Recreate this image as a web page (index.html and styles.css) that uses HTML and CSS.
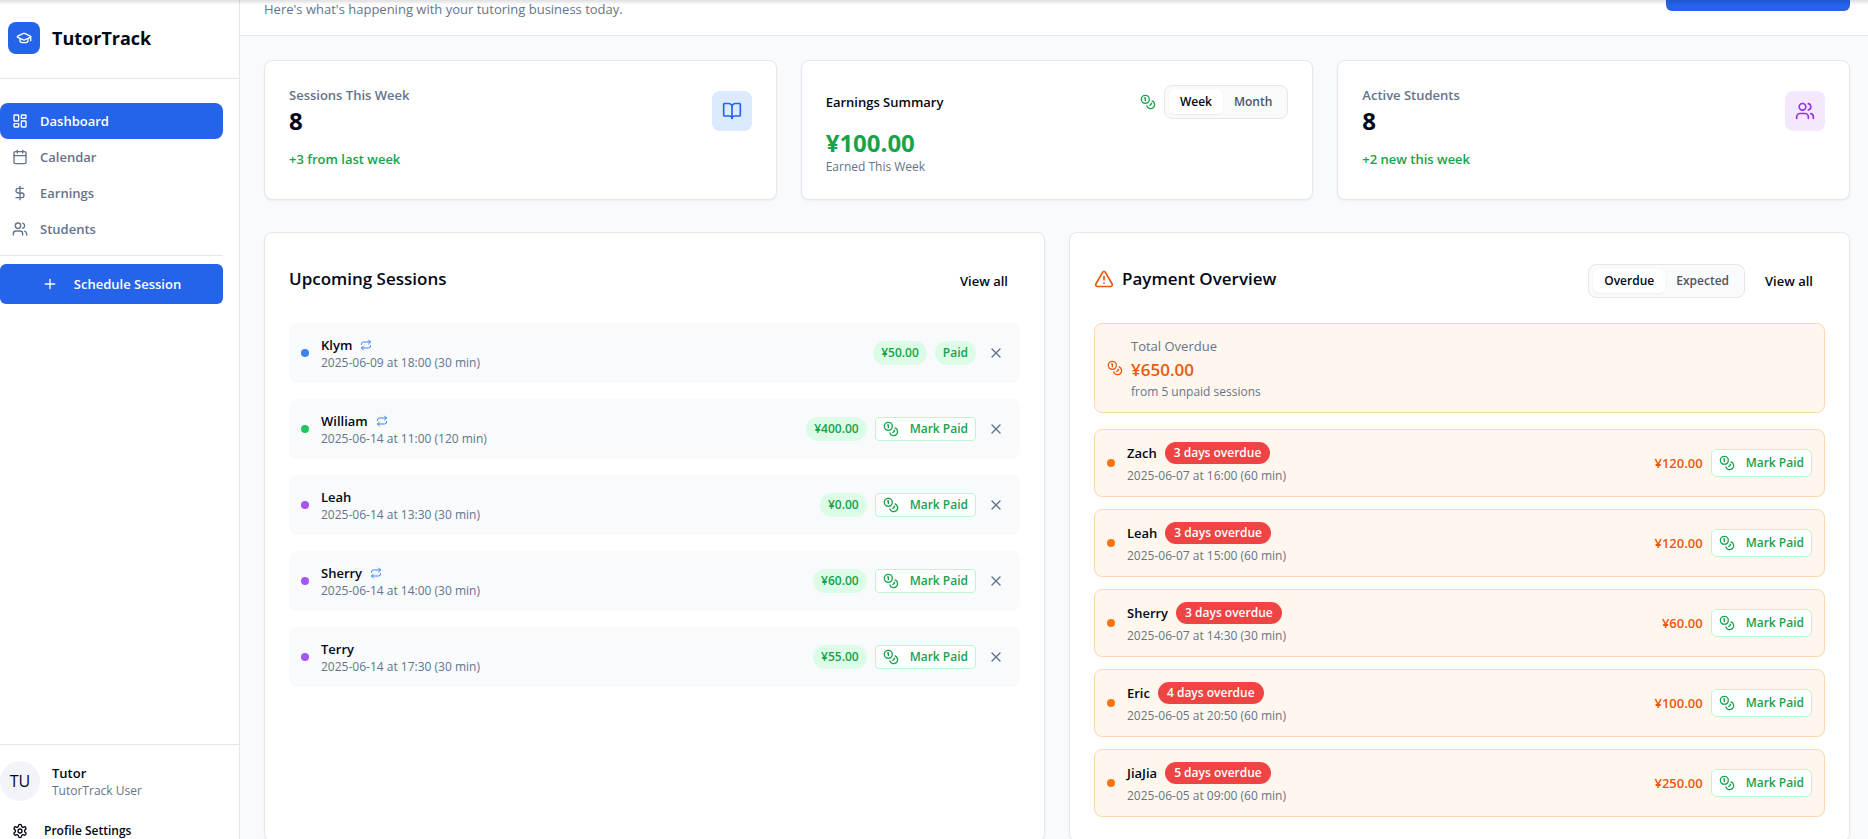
FILE: index.html
```html
<!DOCTYPE html>
<html lang="en">
<head>
<meta charset="utf-8">
<meta name="viewport" content="width=device-width, initial-scale=1">
<title>TutorTrack</title>
<link rel="stylesheet" href="styles.css">
</head>
<body>
<svg class="sprite" aria-hidden="true">
  <symbol id="cap" viewBox="0 0 24 24"><path d="M21.42 10.922a1 1 0 0 0-.019-1.838L12.83 5.18a2 2 0 0 0-1.66 0L2.6 9.08a1 1 0 0 0 0 1.832l8.57 3.908a2 2 0 0 0 1.66 0z"/><path d="M22 10v6"/><path d="M6 12.5V16a6 3 0 0 0 12 0v-3.5"/></symbol>
  <symbol id="dashboard" viewBox="0 0 24 24"><rect width="7" height="9" x="3" y="3" rx="1"/><rect width="7" height="5" x="14" y="3" rx="1"/><rect width="7" height="9" x="14" y="12" rx="1"/><rect width="7" height="5" x="3" y="16" rx="1"/></symbol>
  <symbol id="calendar" viewBox="0 0 24 24"><path d="M8 2v4"/><path d="M16 2v4"/><rect width="18" height="18" x="3" y="4" rx="2"/><path d="M3 10h18"/></symbol>
  <symbol id="dollar" viewBox="0 0 24 24"><path d="M12 2v20"/><path d="M17 5H9.5a3.5 3.5 0 0 0 0 7h5a3.5 3.5 0 0 1 0 7H6"/></symbol>
  <symbol id="users" viewBox="0 0 24 24"><path d="M16 21v-2a4 4 0 0 0-4-4H6a4 4 0 0 0-4 4v2"/><circle cx="9" cy="7" r="4"/><path d="M22 21v-2a4 4 0 0 0-3-3.87"/><path d="M16 3.13a4 4 0 0 1 0 7.75"/></symbol>
  <symbol id="plus" viewBox="0 0 24 24"><path d="M5 12h14"/><path d="M12 5v14"/></symbol>
  <symbol id="settings" viewBox="0 0 24 24"><path d="M12.22 2h-.44a2 2 0 0 0-2 2v.18a2 2 0 0 1-1 1.73l-.43.25a2 2 0 0 1-2 0l-.15-.08a2 2 0 0 0-2.73.73l-.22.38a2 2 0 0 0 .73 2.73l.15.1a2 2 0 0 1 1 1.72v.51a2 2 0 0 1-1 1.74l-.15.09a2 2 0 0 0-.73 2.73l.22.38a2 2 0 0 0 2.73.73l.15-.08a2 2 0 0 1 2 0l.43.25a2 2 0 0 1 1 1.73V20a2 2 0 0 0 2 2h.44a2 2 0 0 0 2-2v-.18a2 2 0 0 1 1-1.73l.43-.25a2 2 0 0 1 2 0l.15.08a2 2 0 0 0 2.73-.73l.22-.39a2 2 0 0 0-.73-2.73l-.15-.08a2 2 0 0 1-1-1.74v-.5a2 2 0 0 1 1-1.74l.15-.09a2 2 0 0 0 .73-2.73l-.22-.38a2 2 0 0 0-2.73-.73l-.15.08a2 2 0 0 1-2 0l-.43-.25a2 2 0 0 1-1-1.73V4a2 2 0 0 0-2-2z"/><circle cx="12" cy="12" r="3"/></symbol>
  <symbol id="book" viewBox="0 0 24 24"><path d="M12 7v14"/><path d="M3 18a1 1 0 0 1-1-1V4a1 1 0 0 1 1-1h5a4 4 0 0 1 4 4 4 4 0 0 1 4-4h5a1 1 0 0 1 1 1v13a1 1 0 0 1-1 1h-6a3 3 0 0 0-3 3 3 3 0 0 0-3-3z"/></symbol>
  <symbol id="coins" viewBox="0 0 24 24"><circle cx="8" cy="8" r="6"/><path d="M18.09 10.37A6 6 0 1 1 10.34 18"/><path d="M7 6h1v4"/><path d="m16.71 13.88.7.71-2.82 2.82"/></symbol>
  <symbol id="repeat" viewBox="0 0 24 24"><path d="m17 2 4 4-4 4"/><path d="M3 11v-1a4 4 0 0 1 4-4h14"/><path d="m7 22-4-4 4-4"/><path d="M21 13v1a4 4 0 0 1-4 4H3"/></symbol>
  <symbol id="close" viewBox="0 0 24 24"><path d="M18 6 6 18"/><path d="m6 6 12 12"/></symbol>
  <symbol id="alert" viewBox="0 0 24 24"><path d="m21.73 18-8-14a2 2 0 0 0-3.48 0l-8 14A2 2 0 0 0 4 21h16a2 2 0 0 0 1.73-3"/><path d="M12 9v4"/><path d="M12 17h.01"/></symbol>
</svg>

<div class="app">
  <aside class="sidebar">
    <div class="brand">
      <span class="brand-mark"><svg class="icon"><use href="#cap"/></svg></span>
      <span class="brand-name">TutorTrack</span>
    </div>
    <nav class="nav">
      <a class="nav-link active" href="#"><svg class="icon"><use href="#dashboard"/></svg>Dashboard</a>
      <a class="nav-link" href="#"><svg class="icon"><use href="#calendar"/></svg>Calendar</a>
      <a class="nav-link" href="#"><svg class="icon"><use href="#dollar"/></svg>Earnings</a>
      <a class="nav-link" href="#"><svg class="icon"><use href="#users"/></svg>Students</a>
      <div class="nav-action">
        <button class="schedule" type="button"><svg class="icon"><use href="#plus"/></svg>Schedule Session</button>
      </div>
    </nav>
    <div class="account">
      <div class="profile">
        <span class="avatar">TU</span>
        <div>
          <div class="name">Tutor</div>
          <div class="meta">TutorTrack User</div>
        </div>
      </div>
      <a class="settings" href="#"><svg class="icon"><use href="#settings"/></svg>Profile Settings</a>
    </div>
  </aside>

  <main class="main">
    <header class="topbar">
      <p class="subtitle">Here's what's happening with your tutoring business today.</p>
      <button class="topbar-action" type="button" aria-label="Schedule Session"></button>
    </header>

    <div class="content">
      <section class="stats">
        <article class="card stat">
          <div class="stat-top">
            <div>
              <div class="stat-label">Sessions This Week</div>
              <div class="stat-value">8</div>
            </div>
            <span class="stat-icon blue"><svg class="icon large"><use href="#book"/></svg></span>
          </div>
          <div class="trend">+3 from last week</div>
        </article>

        <article class="card stat">
          <div class="earn-head">
            <h2 class="earn-title">Earnings Summary</h2>
            <svg class="icon green"><use href="#coins"/></svg>
            <div class="toggle" role="group" aria-label="Earnings period">
              <button class="on" type="button" aria-pressed="true">Week</button>
              <button type="button" aria-pressed="false">Month</button>
            </div>
          </div>
          <div class="stat-value green">¥100.00</div>
          <div class="meta">Earned This Week</div>
        </article>

        <article class="card stat">
          <div class="stat-top">
            <div>
              <div class="stat-label">Active Students</div>
              <div class="stat-value">8</div>
            </div>
            <span class="stat-icon purple"><svg class="icon large"><use href="#users"/></svg></span>
          </div>
          <div class="trend">+2 new this week</div>
        </article>
      </section>

      <section class="panels">
        <article class="card panel">
          <div class="panel-head">
            <h2 class="panel-title">Upcoming Sessions</h2>
            <button class="view-all" type="button">View all</button>
          </div>
          <ul class="sessions">
            <li class="session">
              <span class="dot blue"></span>
              <div class="who"><div class="name">Klym<svg class="icon small"><use href="#repeat"/></svg></div><div class="meta">2025-06-09 at 18:00 (30 min)</div></div>
              <span class="pill">¥50.00</span><span class="pill">Paid</span>
              <button class="dismiss" type="button" aria-label="Cancel session"><svg class="icon"><use href="#close"/></svg></button>
            </li>
            <li class="session">
              <span class="dot green"></span>
              <div class="who"><div class="name">William<svg class="icon small"><use href="#repeat"/></svg></div><div class="meta">2025-06-14 at 11:00 (120 min)</div></div>
              <span class="pill">¥400.00</span>
              <button class="mark" type="button"><svg class="icon"><use href="#coins"/></svg>Mark Paid</button>
              <button class="dismiss" type="button" aria-label="Cancel session"><svg class="icon"><use href="#close"/></svg></button>
            </li>
            <li class="session">
              <span class="dot purple"></span>
              <div class="who"><div class="name">Leah</div><div class="meta">2025-06-14 at 13:30 (30 min)</div></div>
              <span class="pill">¥0.00</span>
              <button class="mark" type="button"><svg class="icon"><use href="#coins"/></svg>Mark Paid</button>
              <button class="dismiss" type="button" aria-label="Cancel session"><svg class="icon"><use href="#close"/></svg></button>
            </li>
            <li class="session">
              <span class="dot purple"></span>
              <div class="who"><div class="name">Sherry<svg class="icon small"><use href="#repeat"/></svg></div><div class="meta">2025-06-14 at 14:00 (30 min)</div></div>
              <span class="pill">¥60.00</span>
              <button class="mark" type="button"><svg class="icon"><use href="#coins"/></svg>Mark Paid</button>
              <button class="dismiss" type="button" aria-label="Cancel session"><svg class="icon"><use href="#close"/></svg></button>
            </li>
            <li class="session">
              <span class="dot purple"></span>
              <div class="who"><div class="name">Terry</div><div class="meta">2025-06-14 at 17:30 (30 min)</div></div>
              <span class="pill">¥55.00</span>
              <button class="mark" type="button"><svg class="icon"><use href="#coins"/></svg>Mark Paid</button>
              <button class="dismiss" type="button" aria-label="Cancel session"><svg class="icon"><use href="#close"/></svg></button>
            </li>
          </ul>
        </article>

        <article class="card panel">
          <div class="panel-head">
            <h2 class="panel-title"><svg class="icon large orange"><use href="#alert"/></svg>Payment Overview</h2>
            <div class="toggle" role="group" aria-label="Payment status">
              <button class="on" type="button" aria-pressed="true">Overdue</button>
              <button type="button" aria-pressed="false">Expected</button>
            </div>
            <button class="view-all" type="button">View all</button>
          </div>
          <div class="total">
            <svg class="icon orange"><use href="#coins"/></svg>
            <div>
              <div class="total-label">Total Overdue</div>
              <div class="total-value">¥650.00</div>
              <div class="meta">from 5 unpaid sessions</div>
            </div>
          </div>
          <ul class="payments">
            <li class="payment">
              <span class="dot orange"></span>
              <div class="who"><div class="name">Zach<span class="badge">3 days overdue</span></div><div class="meta">2025-06-07 at 16:00 (60 min)</div></div>
              <span class="amount">¥120.00</span>
              <button class="mark tall" type="button"><svg class="icon"><use href="#coins"/></svg>Mark Paid</button>
            </li>
            <li class="payment">
              <span class="dot orange"></span>
              <div class="who"><div class="name">Leah<span class="badge">3 days overdue</span></div><div class="meta">2025-06-07 at 15:00 (60 min)</div></div>
              <span class="amount">¥120.00</span>
              <button class="mark tall" type="button"><svg class="icon"><use href="#coins"/></svg>Mark Paid</button>
            </li>
            <li class="payment">
              <span class="dot orange"></span>
              <div class="who"><div class="name">Sherry<span class="badge">3 days overdue</span></div><div class="meta">2025-06-07 at 14:30 (30 min)</div></div>
              <span class="amount">¥60.00</span>
              <button class="mark tall" type="button"><svg class="icon"><use href="#coins"/></svg>Mark Paid</button>
            </li>
            <li class="payment">
              <span class="dot orange"></span>
              <div class="who"><div class="name">Eric<span class="badge">4 days overdue</span></div><div class="meta">2025-06-05 at 20:50 (60 min)</div></div>
              <span class="amount">¥100.00</span>
              <button class="mark tall" type="button"><svg class="icon"><use href="#coins"/></svg>Mark Paid</button>
            </li>
            <li class="payment">
              <span class="dot orange"></span>
              <div class="who"><div class="name">JiaJia<span class="badge">5 days overdue</span></div><div class="meta">2025-06-05 at 09:00 (60 min)</div></div>
              <span class="amount">¥250.00</span>
              <button class="mark tall" type="button"><svg class="icon"><use href="#coins"/></svg>Mark Paid</button>
            </li>
          </ul>
        </article>
      </section>
    </div>
  </main>
</div>
</body>
</html>
```

FILE: styles.css
```css
*, *::before, *::after { box-sizing: border-box; }

:root {
  --ink: #020817;
  --muted: #64748b;
  --line: #e2e8f0;
  --surface: #f8fafc;
  --primary: #2563eb;
  --green: #16a34a;
  --orange: #ea580c;
}

body {
  margin: 0;
  height: 100vh;
  overflow: hidden;
  background: #fff;
  color: var(--ink);
  font: 400 13px/20px "Open Sans", "Noto Sans", sans-serif;
}

/* soft shade under the window's top edge */
body::before {
  content: "";
  position: fixed;
  inset: 0 0 auto;
  height: 5px;
  z-index: 1;
  background: linear-gradient(rgba(0, 0, 0, .12), transparent);
  pointer-events: none;
}

h2, p, ul { margin: 0; padding: 0; }
ul { list-style: none; }
a { color: inherit; text-decoration: none; }
button { margin: 0; border: 0; padding: 0; background: none; color: inherit; font: inherit; cursor: pointer; }

.sprite { display: none; }
.icon {
  flex: none;
  width: 16px;
  height: 16px;
  fill: none;
  stroke: currentColor;
  stroke-width: 2;
  stroke-linecap: round;
  stroke-linejoin: round;
}
.icon.large { width: 20px; height: 20px; }
.icon.small { width: 12px; height: 12px; color: #3b82f6; }
.icon.green { color: var(--green); }
.icon.orange { color: var(--orange); }

.app { display: flex; height: 100%; }

/* sidebar */
.sidebar {
  flex: none;
  display: flex;
  flex-direction: column;
  width: 240px;
  border-right: 1px solid var(--line);
}
.brand {
  display: flex;
  align-items: center;
  gap: 12px;
  padding: 22px 8px 24px;
  border-bottom: 1px solid var(--line);
}
.brand-mark {
  display: grid;
  place-items: center;
  width: 32px;
  height: 32px;
  border-radius: 8px;
  background: var(--primary);
  color: #fff;
}
.brand-name { font-size: 18px; line-height: 28px; font-weight: 700; }
.nav { flex: 1; padding: 24px 16px 0 0; }
.nav-link {
  display: flex;
  align-items: center;
  gap: 12px;
  padding: 8px 12px;
  border-radius: 8px;
  color: var(--muted);
  font-weight: 600;
}
.nav-link.active { background: var(--primary); color: #fff; }
.nav-action { margin-top: 8px; padding-top: 8px; border-top: 1px solid var(--line); }
.schedule {
  display: flex;
  align-items: center;
  justify-content: center;
  gap: 16px;
  width: 100%;
  height: 40px;
  border-radius: 6px;
  background: var(--primary);
  color: #fff;
  font-weight: 600;
}
.account { flex: none; border-top: 1px solid var(--line); padding-top: 16px; }
.profile { display: flex; align-items: center; gap: 12px; }
.avatar {
  display: grid;
  place-items: center;
  width: 40px;
  height: 40px;
  border-radius: 50%;
  background: #f1f5f9;
  font-size: 16px;
}
.settings {
  display: flex;
  align-items: center;
  gap: 16px;
  height: 36px;
  margin-top: 12px;
  padding: 0 12px;
  font-size: 12px;
  font-weight: 600;
}
.account .settings { margin-bottom: -10px; }

/* main column */
.main { flex: 1; min-width: 0; background: var(--surface); overflow: hidden; }
.topbar {
  display: flex;
  align-items: flex-end;
  justify-content: space-between;
  height: 36px;
  padding: 0 18px 16px 24px;
  border-bottom: 1px solid var(--line);
  background: #fff;
}
.subtitle { color: var(--muted); }
.topbar-action {
  width: 184px;
  height: 40px;
  margin-bottom: 8px;
  border-radius: 6px;
  background: var(--primary);
}
.content { padding: 24px 18px 24px 24px; }
.card {
  border: 1px solid var(--line);
  border-radius: 8px;
  background: #fff;
  box-shadow: 0 1px 2px rgba(0, 0, 0, .05);
}

/* stat cards */
.stats { display: grid; grid-template-columns: repeat(3, 1fr); gap: 24px; }
.stat { padding: 24px; }
.stat-top { display: flex; align-items: center; justify-content: space-between; }
.stat-label { color: var(--muted); font-weight: 600; }
.stat-value { font-size: 24px; line-height: 32px; font-weight: 700; }
.stat-value.green { margin-top: 8px; color: var(--green); }
.stat-icon { display: grid; place-items: center; width: 40px; height: 40px; border-radius: 8px; }
.stat-icon.blue { background: #dbeafe; color: #2563eb; }
.stat-icon.purple { background: #f3e8ff; color: #9333ea; }
.trend { margin-top: 12px; color: var(--green); font-weight: 600; }
.earn-head { display: flex; align-items: center; gap: 8px; }
.earn-title { flex: 1; font-size: 13px; line-height: 20px; font-weight: 600; }
.meta { color: var(--muted); font-size: 12px; line-height: 16px; }
.name { display: flex; align-items: center; gap: 8px; font-weight: 600; }

.toggle {
  display: flex;
  height: 34px;
  padding: 4px;
  border: 1px solid #e5e7eb;
  border-radius: 8px;
  background: #f9fafb;
}
.toggle button {
  padding: 0 11px;
  border-radius: 6px;
  color: #4b5563;
  font-size: 12px;
  font-weight: 600;
}
.toggle .on { background: #fff; color: var(--ink); box-shadow: 0 1px 2px rgba(0, 0, 0, .05); }

/* panels */
.panels { display: grid; grid-template-columns: repeat(2, 1fr); gap: 24px; margin-top: 32px; }
.panel { padding: 30px 24px 24px; }
.panel-head { display: flex; align-items: center; gap: 8px; height: 36px; margin-bottom: 24px; }
.panel-title {
  flex: 1;
  display: flex;
  align-items: center;
  align-self: flex-start;
  gap: 8px;
  font-size: 17px;
  line-height: 32px;
  font-weight: 600;
}
.view-all { height: 36px; padding: 0 12px; font-weight: 600; }
.sessions { display: grid; gap: 16px; }
.session {
  display: flex;
  align-items: center;
  gap: 8px;
  padding: 12px;
  border-radius: 8px;
  background: var(--surface);
}
.who { flex: 1; padding-left: 4px; }
.dot { flex: none; width: 8px; height: 8px; border-radius: 50%; }
.dot.blue { background: #3b82f6; }
.dot.green { background: #22c55e; }
.dot.purple { background: #a855f7; }
.dot.orange { background: #f97316; }
.pill {
  padding: 4px 8px;
  border-radius: 12px;
  background: #dcfce7;
  color: var(--green);
  font-size: 12px;
  line-height: 16px;
  font-weight: 600;
}
.mark {
  display: flex;
  align-items: center;
  gap: 11px;
  height: 24px;
  padding: 0 7px;
  border: 1px solid #bbf7d0;
  border-radius: 4px;
  background: #fff;
  color: var(--green);
  font-size: 12px;
  font-weight: 600;
}
.mark.tall { height: 28px; border-radius: 6px; }
.dismiss { display: grid; place-items: center; width: 24px; height: 24px; color: var(--muted); }

.total, .payment {
  display: flex;
  align-items: center;
  gap: 8px;
  padding: 12px;
  border: 1px solid #fed7aa;
  border-radius: 8px;
  background: #fff7ed;
}
.total { margin-bottom: 16px; }
.total-label { color: var(--muted); }
.total-value { color: var(--orange); font-size: 17px; line-height: 28px; font-weight: 600; }
.payments { display: grid; gap: 12px; }
.payment .meta { margin-top: 4px; }
.badge {
  padding: 3px 9px;
  border-radius: 11px;
  background: #ef4444;
  color: #fff;
  font-size: 12px;
  line-height: 16px;
  font-weight: 600;
}
.amount { color: var(--orange); font-weight: 600; }
```
